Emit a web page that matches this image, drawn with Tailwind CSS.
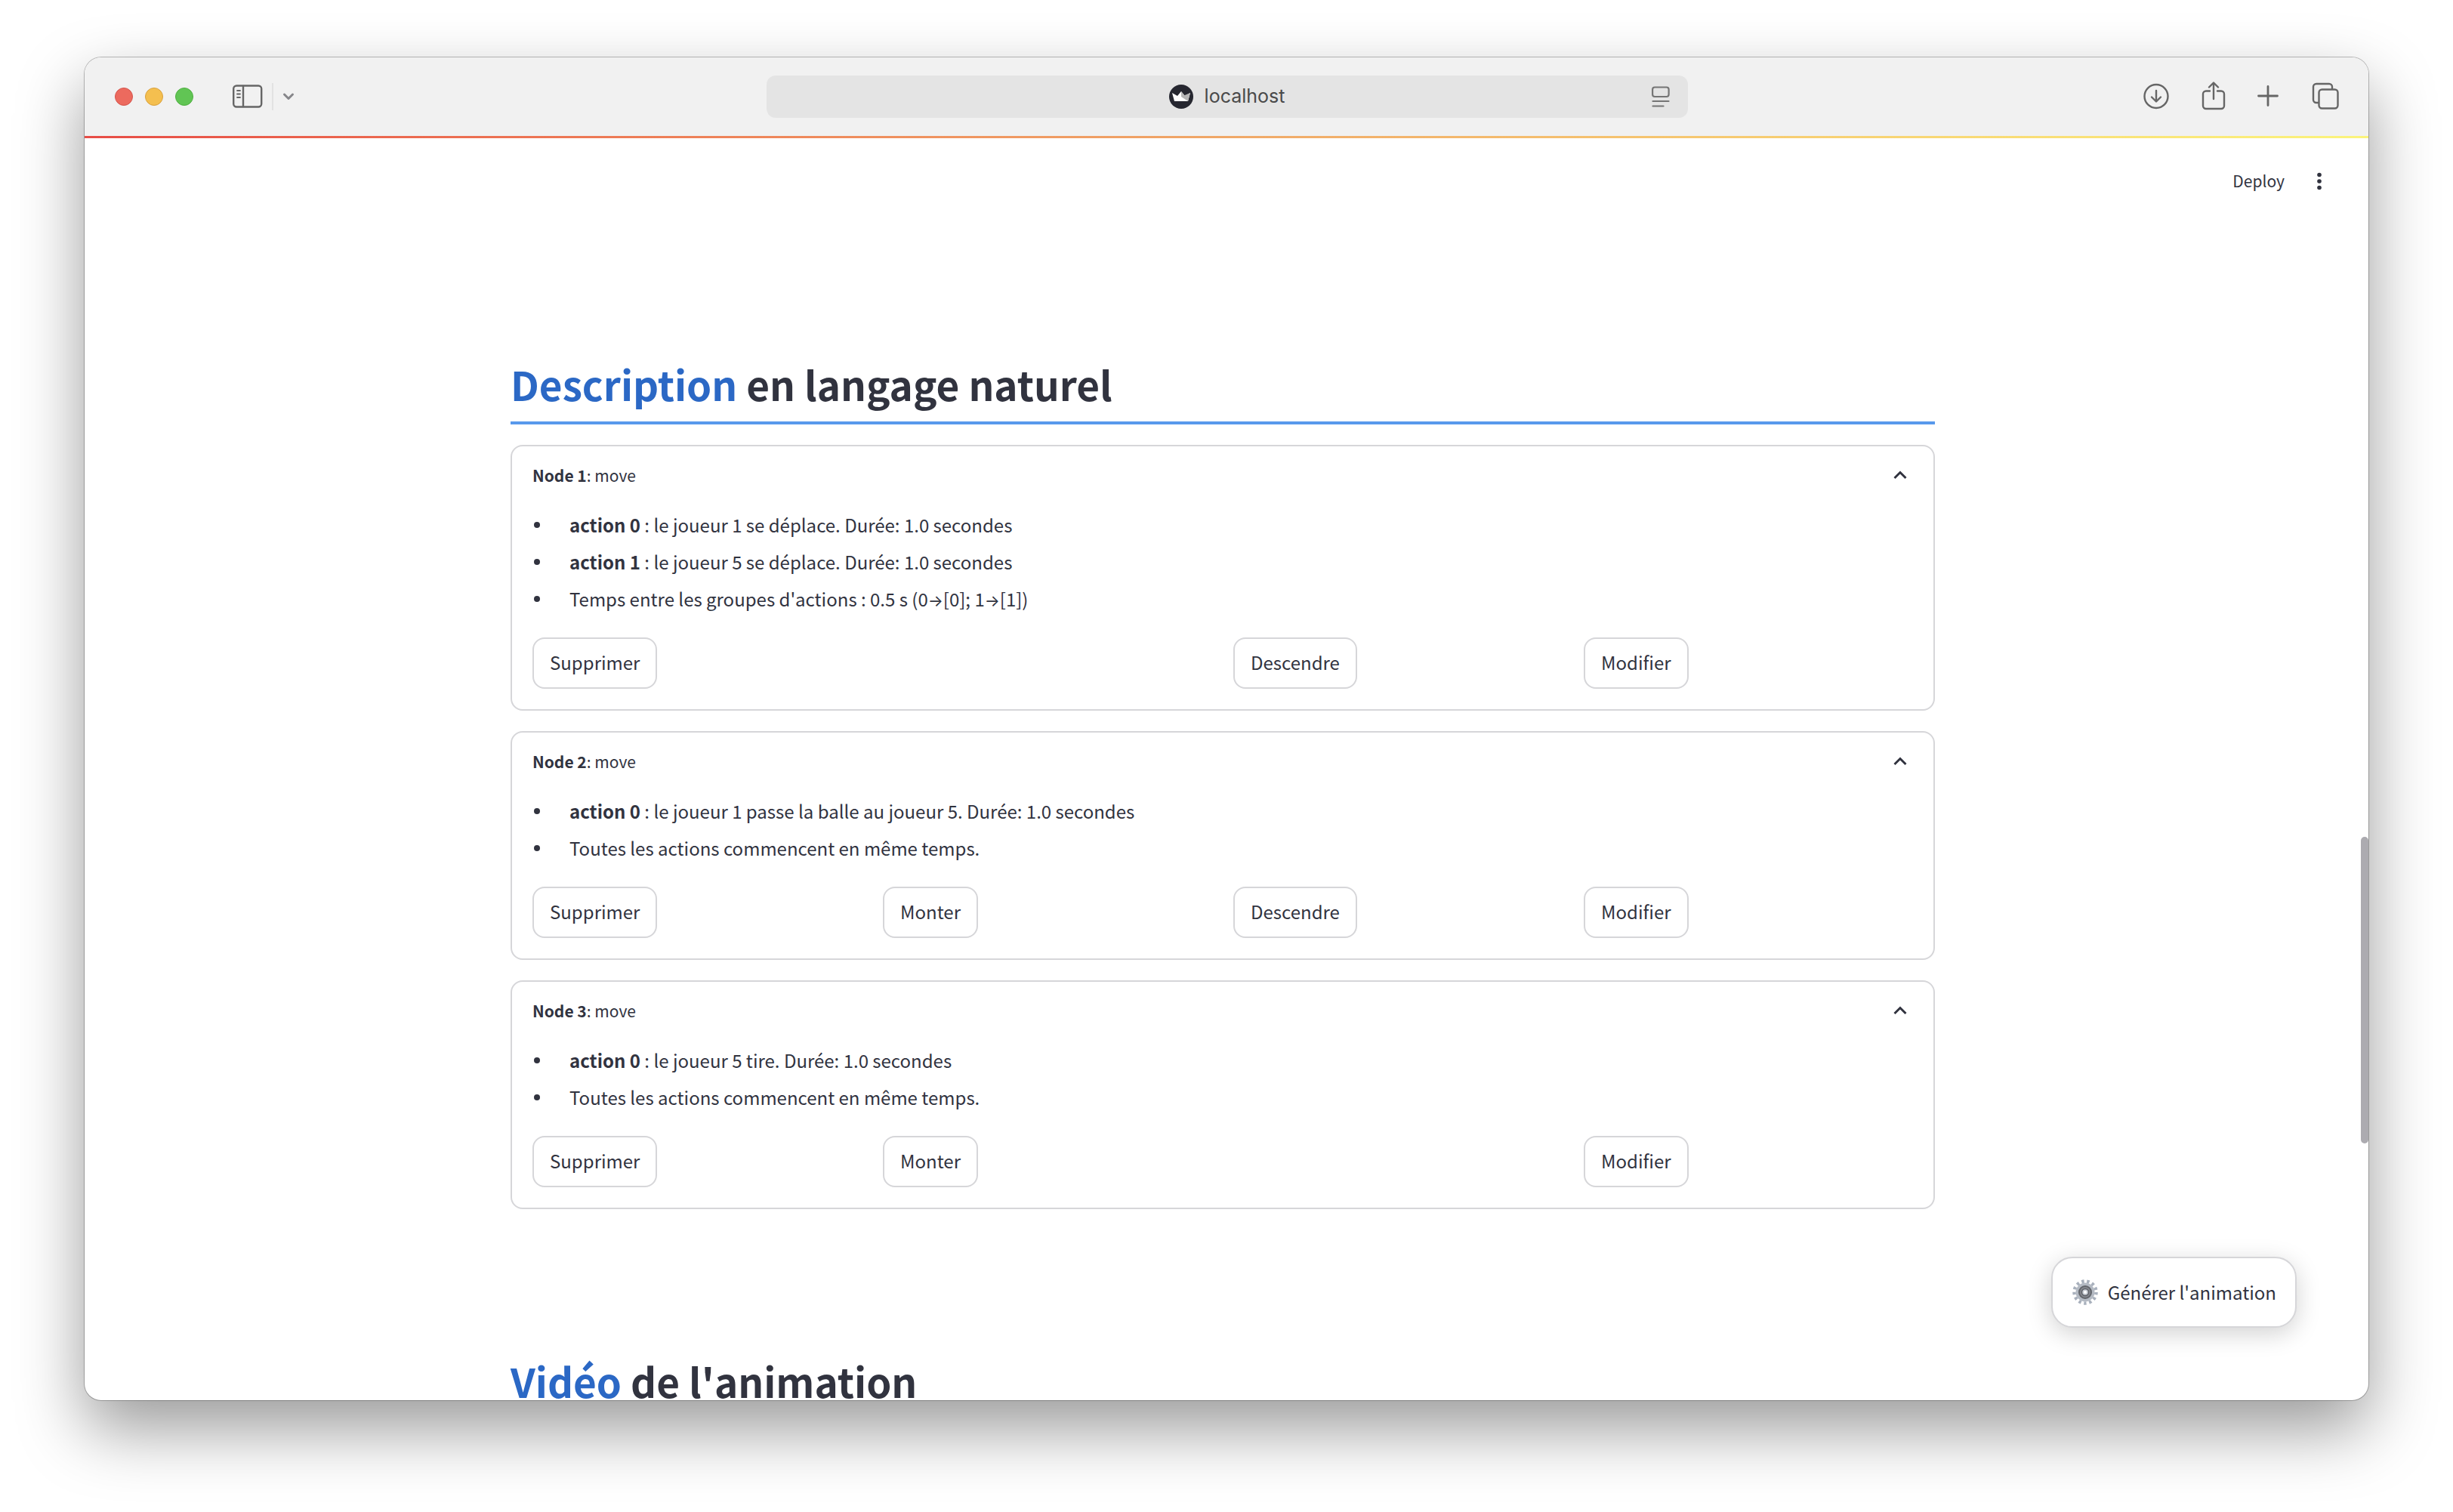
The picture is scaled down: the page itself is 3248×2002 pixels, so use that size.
<!DOCTYPE html>
<html lang="fr">
<head>
<meta charset="utf-8">
<title>localhost</title>
<script src="https://cdn.jsdelivr.net/npm/@tailwindcss/browser@4"></script>
</head>
<body class="h-screen overflow-hidden bg-white px-28 pt-19 pb-37 font-['Noto_Sans_CJK_SC',sans-serif] text-[24px] text-[#31333f]">
<div class="relative flex h-full flex-col overflow-hidden rounded-[22px] bg-white shadow-[0_0_0_1px_rgba(0,0,0,0.25),0_38px_88px_rgba(0,0,0,0.4)]">

  <header class="flex h-[104px] shrink-0 items-center justify-between bg-[#f1f1f1] pr-[39px] pl-10 text-[#666]">
    <div class="flex w-[862px] items-center">
      <div class="flex gap-4">
        <span class="size-6 rounded-full border border-[#d5544c] bg-[#ec6a5e]"></span>
        <span class="size-6 rounded-full border border-[#d9a03c] bg-[#f4bf4f]"></span>
        <span class="size-6 rounded-full border border-[#4fae40] bg-[#61c554]"></span>
      </div>
      <button aria-label="Barre latérale" class="ml-13"><svg class="h-8 w-10" viewBox="0 0 40 32" fill="none" stroke="currentColor" stroke-width="2.4" stroke-linecap="round"><rect x="1.200" y="1.500" width="37" height="28" rx="4"/><path d="M14 2v27"/><path d="M6 8h4M6 12.500h4M6 17h4" stroke-width="1.800"/></svg></button>
      <span class="ml-3 h-9 w-0.5 bg-[#e2e2e2]"></span>
      <button aria-label="Groupes d'onglets" class="ml-3"><svg class="h-3 w-4" viewBox="0 0 16 12" fill="none" stroke="#86868a" stroke-width="3" stroke-linecap="round" stroke-linejoin="round"><path d="M2.500 3l5.500 5.500 5.500-5.500"/></svg></button>
    </div>
    <div class="relative flex h-14 w-[1220px] items-center justify-center gap-[15px] rounded-xl bg-[#e4e4e4] font-[Inter,sans-serif] text-[25px] text-[#4a4a4a]">
      <svg class="size-8" viewBox="0 0 32 32"><circle cx="16" cy="16" r="16" fill="#262730"/><path d="M4 11l7 4 5-6 5 6 7-4-3 11H7z" fill="#fff"/><path d="M16 9l5 6-5 1zM28 11l-3 11-9-6z" fill="#b5b5b5"/></svg>
      <span>localhost</span>
      <svg class="absolute right-6 h-7 w-6" viewBox="0 0 24 28" fill="none" stroke="#757575" stroke-width="2.200" stroke-linecap="round"><rect x="1.100" y="1.500" width="21.500" height="12.500" rx="3"/><path d="M1.500 20h21M1.500 26.500h14"/></svg>
    </div>
    <div class="flex w-[862px] items-center justify-end">
      <button aria-label="Téléchargements"><svg class="h-10 w-9" viewBox="0 0 36 40" fill="none" stroke="currentColor" stroke-width="2.400" stroke-linecap="round" stroke-linejoin="round"><circle cx="18" cy="19.500" r="15.500"/><path d="M18 12v14M12 20.500l6 6 6-6"/></svg></button>
      <button aria-label="Partager" class="ml-10"><svg class="h-10 w-9" viewBox="0 0 36 40" fill="none" stroke="currentColor" stroke-width="2.400" stroke-linecap="round" stroke-linejoin="round"><path d="M13 12.500H8a4 4 0 0 0-4 4V32a4 4 0 0 0 4 4h20a4 4 0 0 0 4-4V16.500a4 4 0 0 0-4-4h-5M18 23V2M12 7.500l6-6 6 6"/></svg></button>
      <button aria-label="Nouvel onglet" class="ml-9"><svg class="h-10 w-9" viewBox="0 0 36 40" fill="none" stroke="currentColor" stroke-width="2.800" stroke-linecap="round"><path d="M18 6.500v25M5.500 19h25"/></svg></button>
      <button aria-label="Aperçu des onglets" class="ml-10"><svg class="h-10 w-9" viewBox="0 0 36 40" fill="none" stroke="currentColor" stroke-width="2.400" stroke-linejoin="round"><rect x="9.500" y="10.500" width="25" height="25" rx="4"/><path d="M9.500 28H6a4 4 0 0 1-4-4V7a4 4 0 0 1 4-4h17a4 4 0 0 1 4 4v3.500"/></svg></button>
    </div>
  </header>
  <div class="h-[3px] shrink-0 bg-linear-to-r from-[#e74c46] via-[#f0a868] to-[#fbf47c]"></div>

  <div class="flex h-[114px] shrink-0 items-center justify-end gap-8 pr-[51px]">
    <button class="text-[21px]">Deploy</button>
    <button aria-label="Menu"><svg class="h-8 w-7" viewBox="0 0 28 32" fill="currentColor"><circle cx="14" cy="7.500" r="2.800"/><circle cx="14" cy="16" r="2.800"/><circle cx="14" cy="24.500" r="2.800"/></svg></button>
  </div>

  <main class="mr-[574px] ml-[564px] pt-[167px]">
    <h2 class="h-[98px] border-b-4 border-[#5899ec] text-[53px] leading-[88px] font-bold"><span class="text-[#2b68c5]">Description</span> en langage naturel</h2>

    <div class="mt-[27px] flex flex-col gap-[27px]">
      <section class="rounded-2xl border-2 border-[#d6d6d9] px-[27px] pb-[27px]">
        <div class="flex h-[78px] items-center justify-between pr-[5px] text-[21px]"><p><b>Node 1</b>: move</p><button aria-label="Replier"><svg class="h-6 w-6" viewBox="0 0 24 24" fill="none" stroke="currentColor" stroke-width="3"><path d="M4.500 15l7.500-7.500 7.500 7.500"/></svg></button></div>
        <ul class="list-none pt-px leading-[49px]">
          <li class="flex h-[49px] items-center gap-[39px]"><span class="ml-0.5 size-2 rounded-full bg-[#31333f]"></span><p><b>action 0</b> : le joueur 1 se déplace. Durée: 1.0 secondes</p></li>
          <li class="flex h-[49px] items-center gap-[39px]"><span class="ml-0.5 size-2 rounded-full bg-[#31333f]"></span><p><b>action 1</b> : le joueur 5 se déplace. Durée: 1.0 secondes</p></li>
          <li class="flex h-[49px] items-center gap-[39px]"><span class="ml-0.5 size-2 rounded-full bg-[#31333f]"></span><p>Temps entre les groupes d'actions : 0.5 s (0<span class="font-[Inter,sans-serif] text-[21px] leading-none">→</span>[0]; 1<span class="font-[Inter,sans-serif] text-[21px] leading-none">→</span>[1])</p></li>
        </ul>
        <div class="mt-[27px] grid grid-cols-4 justify-items-start gap-7">
          <button class="h-[68px] rounded-2xl border-2 border-[#d6d6d9] px-[21px] pb-0.5">Supprimer</button>
          <button class="col-start-3 h-[68px] rounded-2xl border-2 border-[#d6d6d9] px-[21px] pb-0.5">Descendre</button>
          <button class="h-[68px] rounded-2xl border-2 border-[#d6d6d9] px-[21px] pb-0.5">Modifier</button>
        </div>
      </section>
      <section class="rounded-2xl border-2 border-[#d6d6d9] px-[27px] pb-[27px]">
        <div class="flex h-[78px] items-center justify-between pr-[5px] text-[21px]"><p><b>Node 2</b>: move</p><button aria-label="Replier"><svg class="h-6 w-6" viewBox="0 0 24 24" fill="none" stroke="currentColor" stroke-width="3"><path d="M4.500 15l7.500-7.500 7.500 7.500"/></svg></button></div>
        <ul class="list-none pt-px leading-[49px]">
          <li class="flex h-[49px] items-center gap-[39px]"><span class="ml-0.5 size-2 rounded-full bg-[#31333f]"></span><p><b>action 0</b> : le joueur 1 passe la balle au joueur 5. Durée: 1.0 secondes</p></li>
          <li class="flex h-[49px] items-center gap-[39px]"><span class="ml-0.5 size-2 rounded-full bg-[#31333f]"></span><p>Toutes les actions commencent en même temps.</p></li>
        </ul>
        <div class="mt-[27px] grid grid-cols-4 justify-items-start gap-7">
          <button class="h-[68px] rounded-2xl border-2 border-[#d6d6d9] px-[21px] pb-0.5">Supprimer</button>
          <button class="h-[68px] rounded-2xl border-2 border-[#d6d6d9] px-[21px] pb-0.5">Monter</button>
          <button class="h-[68px] rounded-2xl border-2 border-[#d6d6d9] px-[21px] pb-0.5">Descendre</button>
          <button class="h-[68px] rounded-2xl border-2 border-[#d6d6d9] px-[21px] pb-0.5">Modifier</button>
        </div>
      </section>
      <section class="rounded-2xl border-2 border-[#d6d6d9] px-[27px] pb-[27px]">
        <div class="flex h-[78px] items-center justify-between pr-[5px] text-[21px]"><p><b>Node 3</b>: move</p><button aria-label="Replier"><svg class="h-6 w-6" viewBox="0 0 24 24" fill="none" stroke="currentColor" stroke-width="3"><path d="M4.500 15l7.500-7.500 7.500 7.500"/></svg></button></div>
        <ul class="list-none pt-px leading-[49px]">
          <li class="flex h-[49px] items-center gap-[39px]"><span class="ml-0.5 size-2 rounded-full bg-[#31333f]"></span><p><b>action 0</b> : le joueur 5 tire. Durée: 1.0 secondes</p></li>
          <li class="flex h-[49px] items-center gap-[39px]"><span class="ml-0.5 size-2 rounded-full bg-[#31333f]"></span><p>Toutes les actions commencent en même temps.</p></li>
        </ul>
        <div class="mt-[27px] grid grid-cols-4 justify-items-start gap-7">
          <button class="h-[68px] rounded-2xl border-2 border-[#d6d6d9] px-[21px] pb-0.5">Supprimer</button>
          <button class="h-[68px] rounded-2xl border-2 border-[#d6d6d9] px-[21px] pb-0.5">Monter</button>
          <button class="col-start-4 h-[68px] rounded-2xl border-2 border-[#d6d6d9] px-[21px] pb-0.5">Modifier</button>
        </div>
      </section>
    </div>

    <h2 class="mt-[183px] h-[98px] border-b-4 border-[#5899ec] text-[53px] leading-[88px] font-bold"><span class="text-[#2b68c5]">Vidéo</span> de l'animation</h2>
  </main>

  <button class="absolute right-[95px] bottom-24 flex h-[94px] items-center gap-3 rounded-[28px] border-2 border-[#d6d6d9] bg-white px-[25px] shadow-[0_8px_32px_rgba(0,0,0,0.18)]">
    <svg class="size-9" viewBox="-18 -18 36 36"><circle r="14.500" fill="none" stroke="#a9b1bd" stroke-width="4.500" stroke-dasharray="3.400 3.608"/><circle r="10.500" fill="#85888f" stroke="#b4bac3" stroke-width="4"/><circle r="8" fill="#85888f" stroke="#63666c" stroke-width="2"/><circle r="4.500" fill="#c9ced6" stroke="#5e6167" stroke-width="1.500"/><circle r="2" fill="#fff"/></svg>
    <span>Générer l'animation</span>
  </button>
  <div class="absolute top-[1032px] right-0 h-[406px] w-[10px] rounded-full bg-[#acabb0]"></div>
</div>
</body>
</html>
